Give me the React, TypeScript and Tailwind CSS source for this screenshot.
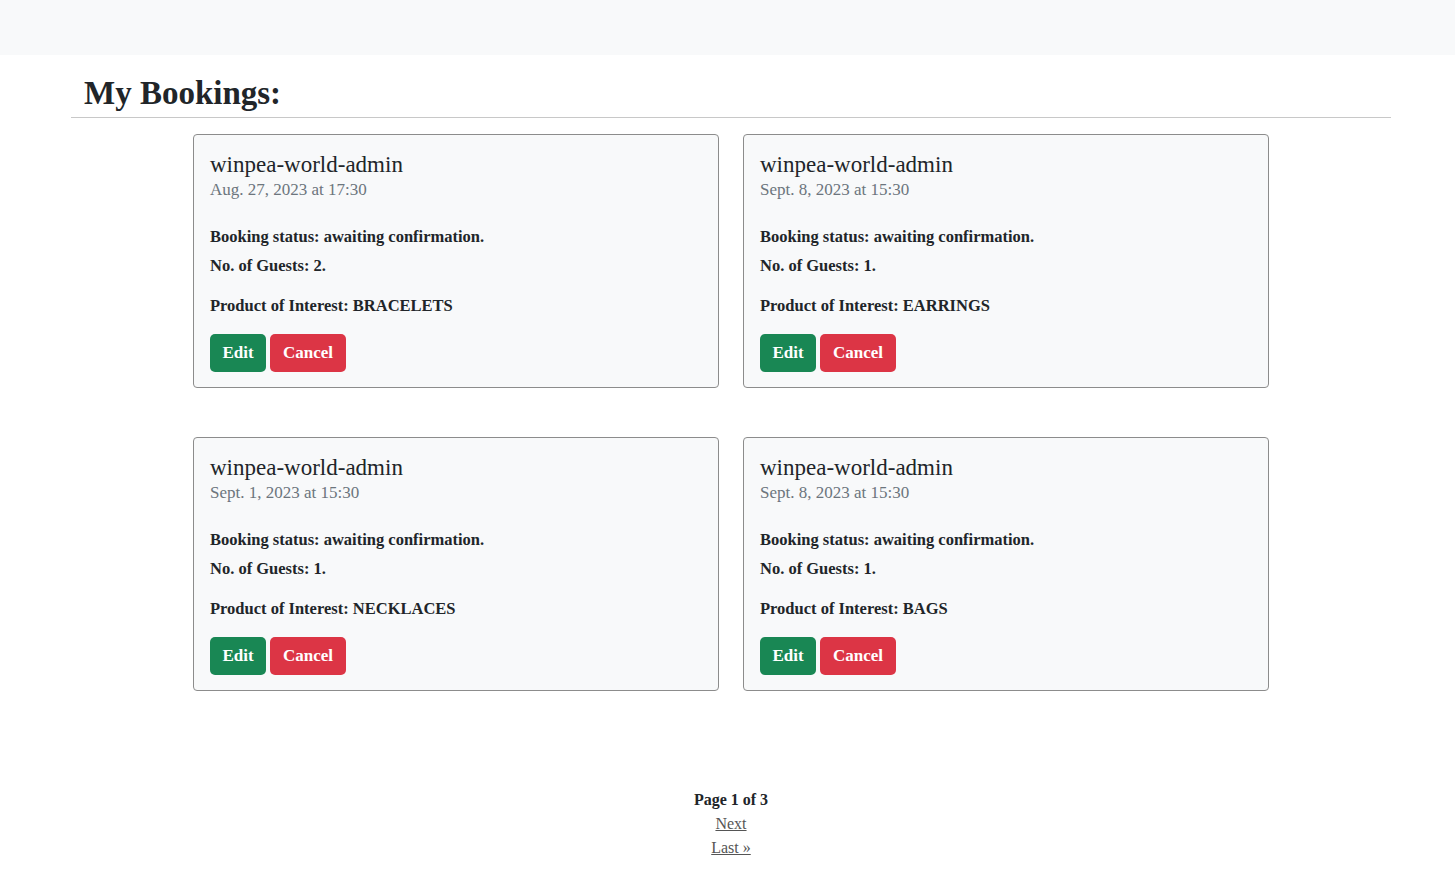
const bookings = [
  { date: "Aug. 27, 2023 at 17:30", guests: 2, product: "BRACELETS" },
  { date: "Sept. 8, 2023 at 15:30", guests: 1, product: "EARRINGS" },
  { date: "Sept. 1, 2023 at 15:30", guests: 1, product: "NECKLACES" },
  { date: "Sept. 8, 2023 at 15:30", guests: 1, product: "BAGS" },
];

const BookingCard = ({ date, guests, product }: { date: string; guests: number; product: string }) => {
  return (
    <div className="rounded border border-[#8c8c8c] bg-[#f8f9fa] px-4 pt-[17px] pb-[15px]">
      <h5 className="text-[23px] leading-[26px] text-[#212529]">winpea-world-admin</h5>
      <p className="text-[17px] leading-[24px] text-[#6c757d]">{date}</p>
      <p className="mt-[23px] text-[16.5px] font-bold leading-[24px] text-[#212529]">Booking status: awaiting confirmation.</p>
      <p className="mt-[5px] text-[16.5px] font-bold leading-[24px] text-[#212529]">No. of Guests: {guests}.</p>
      <p className="mt-4 text-[16.5px] font-bold leading-[24px] text-[#212529]">Product of Interest: {product}</p>
      <div className="mt-4 flex gap-1">
        <button className="h-[38px] w-[56px] rounded-[5px] bg-[#198754] text-[17px] font-bold text-white">Edit</button>
        <button className="h-[38px] w-[76px] rounded-[5px] bg-[#dc3545] text-[17px] font-bold text-white">Cancel</button>
      </div>
    </div>
  );
};

export default function App() {
  return (
    <div className="min-h-[879px] bg-white font-['Liberation_Serif',serif] text-[#212529]">
      <nav className="h-[55px] bg-[#f8f9fa]"></nav>
      <div className="ml-[71px] w-[1320px]">
        <h2 className="pl-[13px] pt-[17px] text-[33px] font-bold leading-[42px]">My Bookings:</h2>
        <hr className="mt-[3px] border-t border-[#c8c8c8]" />
        <div className="mx-auto mt-4 grid w-[1076px] grid-cols-2 gap-x-6 gap-y-[49px]">
          {bookings.map((b, i) => (
            <BookingCard key={i} {...b} />
          ))}
        </div>
        <div className="mt-[97px] flex flex-col items-center text-[16px] leading-[24px]">
          <p className="font-bold">Page 1 of 3</p>
          <a href="#" className="text-[#555] underline">Next</a>
          <a href="#" className="text-[#555] underline">Last &raquo;</a>
        </div>
      </div>
    </div>
  );
}
